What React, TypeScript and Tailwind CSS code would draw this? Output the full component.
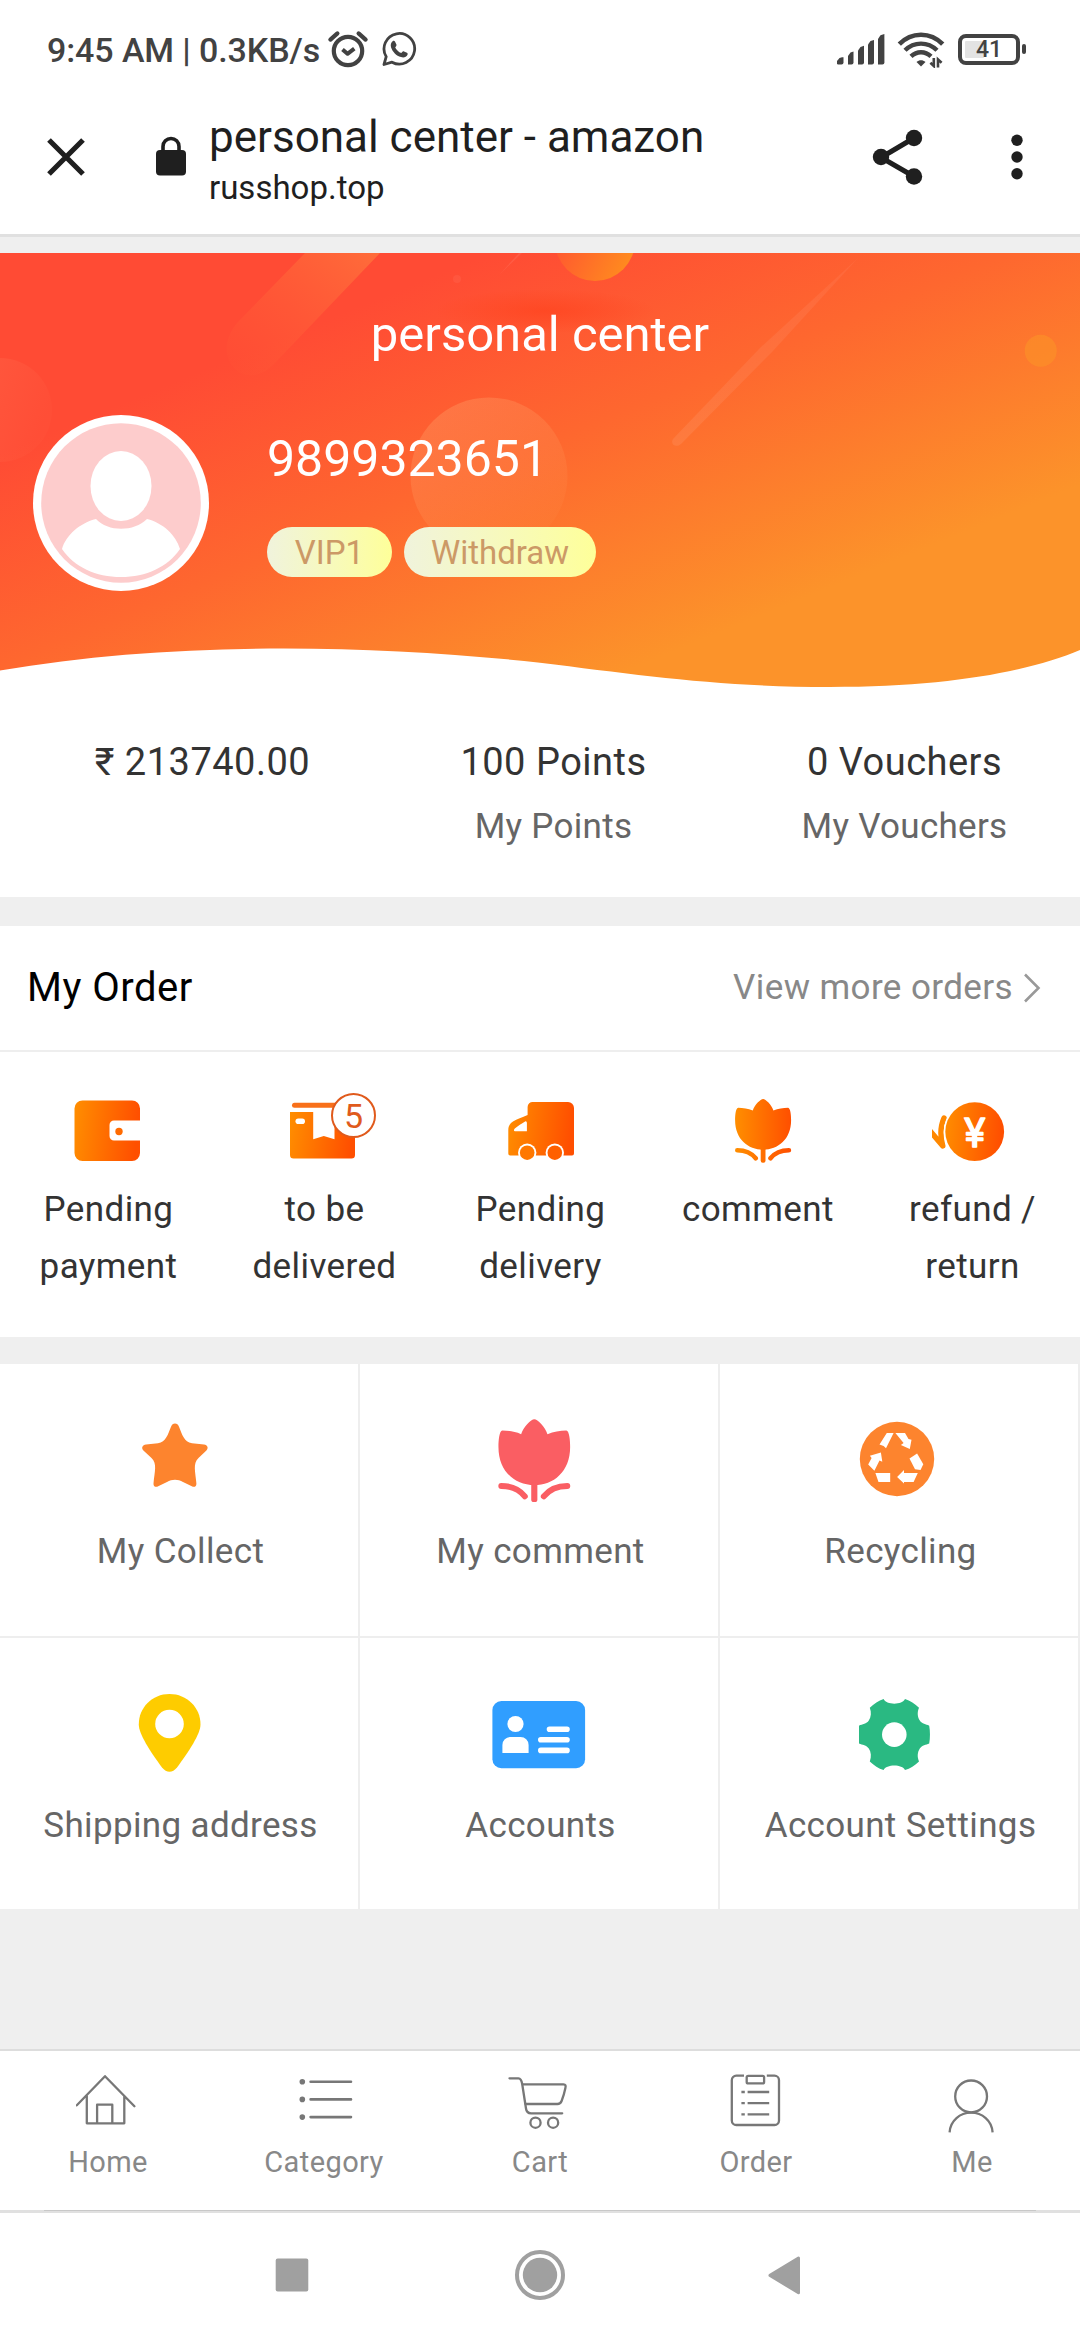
import React from "react";

const orderGradient = (id: string) => (
  <defs>
    <linearGradient id={id} x1="0" x2="1" y1="0" y2="0.1">
      <stop offset="0" stopColor="#ff8e00" />
      <stop offset="1" stopColor="#ff4f00" />
    </linearGradient>
  </defs>
);

function TulipShape({ fill }: { fill: string }) {
  return (
    <>
      <path
        d="M0 -50.3C2.5 -50.3 8.5 -44.5 10.3 -38.8C15 -40.8 20 -41.5 25 -41.6C27.4 -41.2 28 -34 28 -29C28 -10 15 0.4 0 0.4C-15 0.4 -28 -10 -28 -29C-28 -34 -27.4 -41.2 -25 -41.6C-20 -41.5 -15 -40.8 -10.3 -38.8C-8.5 -44.5 -2.5 -50.3 0 -50.3Z"
        fill={fill}
      />
      <path
        d="M-25.8 1C-18 1 -11.5 4 -7.4 9M25.8 1C18 1 11.5 4 7.4 9"
        fill="none"
        stroke={fill}
        strokeWidth="4.6"
        strokeLinecap="round"
      />
      <rect x="-2.4" y="-2" width="4.8" height="15.4" rx="2" fill={fill} />
    </>
  );
}

function WalletIcon() {
  return (
    <svg className="h-[76px] w-[90px]" viewBox="0 0 90 76">
      {orderGradient("g-wallet")}
      <path
        d="M19.5 10.5H69A8 8 0 0 1 77 18.5V30.5H51A4.5 4.5 0 0 0 46.5 35V46A4.5 4.5 0 0 0 51 50.5H77V63A8 8 0 0 1 69 71H19.5A8 8 0 0 1 11.5 63V18.5A8 8 0 0 1 19.5 10.5Z"
        fill="url(#g-wallet)"
      />
      <circle cx="56" cy="41.5" r="3.7" fill="#ff6a00" />
    </svg>
  );
}

function BoxIcon() {
  return (
    <svg className="h-[76px] w-[90px]" viewBox="0 0 90 76">
      {orderGradient("g-box")}
      <rect x="13" y="12.7" width="56" height="5" rx="2.5" fill="#f8701a" />
      <path
        d="M11 22H34.2V49.3L44.8 46L55.5 49.3V22H76V65A3.5 3.5 0 0 1 72.5 68.5H14.5A3.5 3.5 0 0 1 11 65Z"
        fill="url(#g-box)"
      />
      <rect x="16.5" y="28.5" width="9.5" height="5.6" rx="2.8" fill="#fff" />
    </svg>
  );
}

function TruckIcon() {
  return (
    <svg className="h-[76px] w-[90px]" viewBox="0 0 90 76">
      {orderGradient("g-truck")}
      <path
        d="M38 12H73A6 6 0 0 1 79 18V63.5A2 2 0 0 1 77 65.5H15.5A2 2 0 0 1 13.3 63.5V40C13.3 36 15 33.5 18 31.5C22 29 27 27.5 32.6 25V17A5 5 0 0 1 38 12Z"
        fill="url(#g-truck)"
      />
      <path d="M20 41.2C18.6 41.2 18.6 39.6 19.8 38.5C22.5 36 27 33.5 30.5 31.2Q31.9 31 31.9 33V41.2Z" fill="#fff" />
      <circle cx="32.2" cy="62.7" r="9.2" fill="#fff" />
      <circle cx="59.8" cy="62.7" r="9.2" fill="#fff" />
      <circle cx="32.2" cy="62.7" r="7.3" fill="#ff7800" />
      <circle cx="59.8" cy="62.7" r="7.3" fill="#ff6000" />
    </svg>
  );
}

function CommentIcon() {
  return (
    <svg className="h-[76px] w-[90px]" viewBox="0 0 90 76">
      <defs>
        <linearGradient id="g-tulip" gradientUnits="userSpaceOnUse" x1="-28" x2="28" y1="0" y2="0">
          <stop offset="0" stopColor="#ff8e00" />
          <stop offset="1" stopColor="#ff4f00" />
        </linearGradient>
      </defs>
      <g transform="translate(52.1 59.3)">
        <TulipShape fill="url(#g-tulip)" />
      </g>
    </svg>
  );
}

function RefundIcon() {
  return (
    <svg className="h-[76px] w-[90px]" viewBox="0 0 90 76">
      {orderGradient("g-refund")}
      <clipPath id="refund-clip">
        <rect x="5" width="85" height="76" />
      </clipPath>
      <path
        d="M17 28C13.5 36 13 46 15.8 56L4 42"
        fill="none"
        stroke="#ff8800"
        strokeWidth="5.4"
        strokeLinecap="round"
        strokeLinejoin="round"
        clipPath="url(#refund-clip)"
      />
      <circle cx="47.7" cy="41.7" r="31" fill="#fff" />
      <circle cx="47.7" cy="41.7" r="29.4" fill="url(#g-refund)" />
      <text
        x="47.7"
        y="56.8"
        textAnchor="middle"
        fill="#fff"
        stroke="#fff"
        strokeWidth="1.4"
        strokeLinejoin="round"
        className="font-['Roboto',sans-serif] text-[40px] font-normal"
      >
        ¥
      </text>
    </svg>
  );
}

function StarIcon() {
  return (
    <svg className="size-[100px]" viewBox="0 0 100 100">
      <path
        d="M46 13.6C48 13.6 49 14.6 50 16.8C53 24 55 32.4 63 33.2L75 34.6C78.6 35 79.8 38 77.4 40.4L69.5 48C63.5 53.5 66.5 62 67.4 73.4C67.5 76.4 65.5 77.6 62.8 76.3L54 72C49 69 43 69 38 72L29.2 76.3C26.5 77.6 24.3 76.4 24.5 73.4C25.5 62 28.5 53.5 22.5 48L14.4 40.4C12 38 13.4 35 17 34.6L29 33.2C37 32.4 39 24 42 16.8C43 14.6 44 13.6 46 13.6Z"
        fill="#fd842e"
      />
    </svg>
  );
}

function TulipIcon() {
  return (
    <svg className="size-[100px]" viewBox="0 0 100 100">
      <g transform="translate(45.3 74.6) scale(1.28 1.3)">
        <TulipShape fill="#fa5e63" />
      </g>
    </svg>
  );
}

function RecycleIcon() {
  return (
    <svg className="size-[100px]" viewBox="0 0 100 100">
      <circle cx="48" cy="49" r="37.2" fill="#fd842e" />
      <g fill="#fff">
        <path d="M37.8 22.9H44.6L37 38.2L34.6 36L30.5 34.6Z" />
        <path d="M46.4 22.9H56L59.5 29L62.5 29.8L60.8 38.9L51.9 35L54.6 33Z" />
        <path d="M20.9 45.7L31.9 42.5L33.3 51.8L30.5 50.4L25.4 60.7L19.2 54.6L22.6 48Z" />
        <path d="M26.4 62.9H41.2V72.1H29.5Z" />
        <path d="M48.1 67.1L55 60V62.9H68.8L64.6 72.1H55V73.6Z" />
        <path d="M60.5 48.6L68.1 43.6L74.3 54.3L71.5 60L66 59.3Z" />
      </g>
    </svg>
  );
}

function PinIcon() {
  return (
    <svg className="size-[100px]" viewBox="0 1 100 100">
      <path
        d="M40.5 11C58 11 71.5 24.5 71.5 41.5C71.5 51 60 68 48 84.5C43.5 90.2 37.5 90.2 33 84.5C21 68 9.8 51 9.8 41.5C9.8 24.5 23 11 40.5 11Z"
        fill="#fecc00"
      />
      <circle cx="40.5" cy="41" r="14.3" fill="#fff" />
    </svg>
  );
}

function CardIcon() {
  return (
    <svg className="size-[100px]" viewBox="0 1 100 100">
      <rect x="3.4" y="18" width="92.7" height="67.2" rx="9" fill="#309eff" />
      <circle cx="26.5" cy="41" r="8.1" fill="#fff" />
      <path d="M13.4 70V62A8 8 0 0 1 21.4 54H31.6A8 8 0 0 1 39.6 62V70Z" fill="#fff" />
      <path
        d="M60.5 46.3H78M51.8 56.7H78M51.8 67.4H78"
        stroke="#fff"
        strokeWidth="5.6"
        strokeLinecap="round"
      />
    </svg>
  );
}

function GearIcon() {
  return (
    <svg className="size-[100px]" viewBox="0 1 100 100">
      <path
        d="M34.6 16.1C37 22.3 53.6 22.3 56 16.1C61 17.8 66 20.8 70 24.8C68 29.5 68.5 34 70.8 37.6C73 41 77 41.3 80.2 42.7C81.2 48 81.2 55 80.2 60.5C77 61.9 73 62.2 70.8 65.6C68.5 69.2 68 73.7 70 78.4C66 82.4 61 85.4 56 87.1C53.6 80.9 37 80.9 34.6 87.1C29.6 85.4 25 82.4 20.8 78.4C22.6 73.7 22.1 69.2 19.8 65.6C17.6 62.2 13.4 61.9 10 60.5V42.7C13.4 41.3 17.6 41 19.8 37.6C22.1 34 22.6 29.5 20.8 24.8C25 20.8 29.6 17.8 34.6 16.1Z"
        fill="#2ab982"
      />
      <circle cx="45.3" cy="51.6" r="12.3" fill="#fff" />
    </svg>
  );
}

const tabIcon = "size-16 fill-none stroke-[#777] stroke-[2.3]";

function HomeIcon() {
  return (
    <svg className={tabIcon} viewBox="0 0 64 64" strokeLinecap="round" strokeLinejoin="round">
      <path d="M0.8 35.3L29 6.2L58.4 36.2M10.8 26V53.3H48.3V26M21.1 53V34.7H36.3V53" />
    </svg>
  );
}

function CategoryIcon() {
  return (
    <svg className={tabIcon} viewBox="0 0 64 64" strokeLinecap="round">
      <path d="M18.6 11.7H59M18.6 29.4H59M18.6 47.1H59" strokeWidth="2.6" />
      <g fill="#777" stroke="none">
        <circle cx="10.3" cy="11.7" r="2.8" />
        <circle cx="10.3" cy="29.4" r="2.8" />
        <circle cx="10.3" cy="47.1" r="2.8" />
      </g>
    </svg>
  );
}

function CartIcon() {
  return (
    <svg className={tabIcon} viewBox="0 0 64 64" strokeLinecap="round" strokeLinejoin="round">
      <path d="M1.5 8.3H10.5C13 8.3 13.7 11 14.2 14L18 38.5C18.4 41.8 20 43.3 23 43.3H54.2" />
      <path d="M14.8 14.3H55.5C57.5 14.3 58 15.5 57.4 18C56.6 22 55.4 26.5 53.6 31C52.6 33.4 51.8 34 49.5 34H17.6" />
      <circle cx="27.5" cy="52.7" r="5.1" />
      <circle cx="45.1" cy="52.7" r="5.1" />
    </svg>
  );
}

function OrderIcon() {
  return (
    <svg className={tabIcon} viewBox="0 0 64 64">
      <path d="M20 5.7H12.3A4.5 4.5 0 0 0 7.8 10.2V50.5A4.5 4.5 0 0 0 12.3 55H50.5A4.5 4.5 0 0 0 55 50.5V10.2A4.5 4.5 0 0 0 50.5 5.7H42.8" />
      <rect x="22.7" y="5.8" width="17.4" height="7.6" rx="1.5" />
      <path d="M17.4 22H20.8M23.6 22H45.2M17.4 33.1H20.8M23.6 33.1H45.2M17.4 44.4H20.8M23.6 44.4H45.2" />
    </svg>
  );
}

function MeIcon() {
  return (
    <svg className={tabIcon} viewBox="0 0 64 64">
      <circle cx="31.1" cy="26.4" r="15.9" />
      <path d="M9.6 62.3C10.4 50.5 20 42.7 31.1 42.7S51.8 50.5 52.6 62.3" />
    </svg>
  );
}

function StatusBar() {
  return (
    <div className="flex h-[100px] items-center pr-[54px] pl-[47px] text-[#424242]">
      <span className="text-[34px] leading-none font-medium tracking-[-0.1px] whitespace-pre">
        9:45 AM | 0.3KB/s
      </span>
      <svg className="ml-[7px] h-[40px] w-[42px] fill-none stroke-[#424242]" viewBox="0 0 42 40">
        <circle cx="21" cy="21" r="14.2" strokeWidth="4.2" />
        <path d="M3.4 9.6L10.4 3.4M38.6 9.6L31.6 3.4" strokeWidth="4.2" strokeLinecap="round" />
        <path d="M15.5 19.5L20.5 23.8L27.3 18.6" strokeWidth="4" strokeLinejoin="round" />
      </svg>
      <svg className="ml-[12px] size-[36px]" viewBox="0 1 36 36">
        <path
          d="M3 33.5L5.2 25.6A15.3 15.3 0 1 1 11 31.2Z"
          fill="none"
          stroke="#424242"
          strokeWidth="2.8"
          strokeLinejoin="round"
        />
        <path
          d="M11.6 10.2C12.6 9.5 13.6 9.7 14.1 10.7L15.4 13.6C15.7 14.4 15.4 15.2 14.2 16.4C15.5 19 17.6 20.9 20.3 22C21.6 20.5 22.1 20 23 20.4L26 21.8C26.8 22.3 26.9 23 26.4 24.1C25.4 26.2 22.6 27 20 26.1C15.2 24.6 11.6 20.8 10.1 16.4C9.4 14 9.8 11.6 11.6 10.2Z"
          fill="#424242"
        />
      </svg>
      <div className="ml-auto flex items-center pb-0.5">
        <svg className="h-[36px] w-[50px] fill-[#424242]" viewBox="0 0 50 36">
          <path d="M1 33V30L3.5 27L6 26.2H7.5V31.5A2 2 0 0 1 5.5 33.5H2Z" />
          <path d="M12 33.5V25L14.5 21.5L17.5 20.5V31.5A2 2 0 0 1 15.5 33.5Z" />
          <path d="M22 33.5V19.5L24.5 16L28 14.8V31.5A2 2 0 0 1 26 33.5Z" />
          <path d="M32 33.5V13.5L34.5 10L38 9V31.5A2 2 0 0 1 36 33.5Z" />
          <path d="M42 33.5V8L44.5 4.2L48.4 3V31.5A2 2 0 0 1 46.4 33.5Z" />
        </svg>
        <svg className="ml-[11px] h-[38px] w-[48px] fill-none stroke-[#424242]" viewBox="0 0 48 38">
          <path d="M2.3 14.2C14.5 1.6 33.5 1.6 45.7 14.2" strokeWidth="4.6" />
          <path d="M8 20.3C17 11.4 31 11.4 40 20.3" strokeWidth="4.4" />
          <path d="M14 26.4C19.8 20.8 28.2 20.8 34 26.4" strokeWidth="4.4" />
          <path d="M19.5 32C22.2 29.5 25.8 29.5 28.5 32L24 36.4Z" fill="#424242" stroke="none" />
          <path d="M33.4 32.8L36.8 36V28M41 37.5V29.5L44.6 32.8" strokeWidth="2.6" />
        </svg>
        <div className="ml-[13px] flex h-[31px] w-[62px] items-center justify-center rounded-[8px] border-4 border-[#424242] bg-linear-to-r from-[#e3e3e3] from-40% to-white to-40% pt-px text-[23px] leading-none font-medium shadow-[inset_0_0_0_3px_white]">
          41
        </div>
        <div className="ml-0.5 h-[10px] w-[4px] rounded-sm bg-[#424242]" />
      </div>
    </div>
  );
}

function AddressBar() {
  return (
    <div className="flex h-[137px] border-b-[3px] border-[#e0e0e0] text-[#1f1f1f]">
      <svg className="mt-[37px] ml-[46px] size-[40px]" viewBox="0 0 40 40">
        <path d="M3 3L37 37M37 3L3 37" stroke="#1f1f1f" strokeWidth="5.2" />
      </svg>
      <svg className="mt-[35px] ml-[69px] h-[42px] w-[32px]" viewBox="0 0 32 42">
        <rect x="1" y="15" width="30" height="25.5" rx="4" fill="#1f1f1f" />
        <path d="M8 16V11.5A8 8 0 0 1 24 11.5V16" fill="none" stroke="#1f1f1f" strokeWidth="3.6" />
      </svg>
      <div className="mt-[10px] ml-[22px] flex flex-col">
        <span className="text-[44px] leading-[54px]">personal center - amazon</span>
        <span className="text-[33px] leading-[48px]">russhop.top</span>
      </div>
      <svg className="mt-[27px] ml-auto h-[60px] w-[54px]" viewBox="0 0 54 60">
        <path d="M43 11L10 30.5L43 49.5" fill="none" stroke="#1f1f1f" strokeWidth="5" />
        <g fill="#1f1f1f">
          <circle cx="43" cy="11" r="8.2" />
          <circle cx="10" cy="30" r="8.2" />
          <circle cx="43" cy="49.5" r="8.2" />
        </g>
      </svg>
      <svg className="mt-[32px] mr-[53px] ml-[82px] h-[50px] w-[20px]" viewBox="0 0 20 50">
        <g fill="#1f1f1f">
          <circle cx="10" cy="8.3" r="5.7" />
          <circle cx="10" cy="25" r="5.7" />
          <circle cx="10" cy="41.7" r="5.7" />
        </g>
      </svg>
    </div>
  );
}

function HeroBackground() {
  return (
    <svg className="absolute inset-0 h-[441px] w-full" viewBox="0 0 1080 441">
      <defs>
        <linearGradient id="hero" gradientUnits="userSpaceOnUse" x1="0" y1="200" x2="166" y2="606">
          <stop offset="0" stopColor="#ff4b34" />
          <stop offset="0.45" stopColor="#fe672f" />
          <stop offset="1" stopColor="#fc932a" />
        </linearGradient>
        <linearGradient id="band" gradientUnits="userSpaceOnUse" x1="360" y1="-20" x2="240" y2="120">
          <stop offset="0" stopColor="#ff6d3a" />
          <stop offset="1" stopColor="#ff5836" stopOpacity="0.15" />
        </linearGradient>
        <linearGradient id="ball" x1="0.1" y1="0.5" x2="0.9" y2="0.9">
          <stop offset="0" stopColor="#ff5a2f" />
          <stop offset="1" stopColor="#ff8c1e" />
        </linearGradient>
        <linearGradient id="soft" x1="0.2" y1="0" x2="0.8" y2="1">
          <stop offset="0" stopColor="#ffc080" stopOpacity="0.26" />
          <stop offset="1" stopColor="#ffc080" stopOpacity="0.02" />
        </linearGradient>
        <linearGradient id="edge" x1="0" y1="0" x2="1" y2="0.4">
          <stop offset="0" stopColor="#ffb080" stopOpacity="0.16" />
          <stop offset="1" stopColor="#ffb080" stopOpacity="0.03" />
        </linearGradient>
        <linearGradient id="comet" x1="0" y1="1" x2="1" y2="0">
          <stop offset="0" stopColor="#fff" stopOpacity="0.08" />
          <stop offset="1" stopColor="#fff" stopOpacity="0.05" />
        </linearGradient>
        <radialGradient id="smudge">
          <stop offset="0" stopColor="#ff431e" stopOpacity="0.7" />
          <stop offset="1" stopColor="#ff431e" stopOpacity="0" />
        </radialGradient>
      </defs>
      <rect width="1080" height="441" fill="url(#hero)" />
      <path
        d="M305 0H380L274 111C262 124 244 127 233 114C223 102 225 84 237 70Z"
        fill="url(#band)"
      />
      <circle cx="0" cy="157" r="52" fill="url(#edge)" />
      <circle cx="489" cy="223" r="78.5" fill="url(#soft)" />
      <ellipse cx="545" cy="58" rx="110" ry="22" fill="url(#smudge)" />
      <circle cx="595" cy="-12" r="40" fill="url(#ball)" />
      <circle cx="457" cy="26" r="4" fill="#fff" fillOpacity="0.05" />
      <path d="M499 22L519 0H522Z" fill="#fff" fillOpacity="0.08" />
      <path
        d="M673 186L760 95L858 5L772 99L681 191C676 195 670 192 673 186Z"
        fill="url(#comet)"
      />
      <circle cx="1040.7" cy="97.7" r="16" fill="#fc9128" fillOpacity="0.65" />
      <path
        d="M0 417.5C170 388 370 391 540 409.7C640 422 720 434 830 434C950 434 1030 418 1080 397V441H0Z"
        fill="#fff"
      />
    </svg>
  );
}

function Avatar() {
  return (
    <svg className="size-[176px]" viewBox="0 0 176 176">
      <circle cx="88" cy="88" r="88" fill="#fff" />
      <circle cx="88" cy="88" r="79.8" fill="#fdcccc" />
      <ellipse cx="88" cy="71" rx="30.5" ry="35" fill="#fff" />
      <path
        d="M63 104C75 117 101 117 114 104C130 108 143 120 147 134C135 152 113 162 88 162S41 152 29 134C33 120 47 108 63 104Z"
        fill="#fff"
      />
    </svg>
  );
}

function Hero() {
  return (
    <section className="relative h-[441px] bg-white text-white">
      <HeroBackground />
      <div className="relative flex flex-col">
        <h1 className="pt-[52px] text-center text-[49px] leading-[60px]">personal center</h1>
        <div className="mt-[50px] flex pl-[33px]">
          <Avatar />
          <div className="ml-[58px] flex flex-col pt-[14px]">
            <span className="text-[50px] leading-[60px]">9899323651</span>
            <div className="mt-[38px] flex gap-3 text-[33px] text-[#cc9966]">
              <span className="h-[50px] w-[125px] rounded-full bg-linear-to-r from-[#f0f3dc] to-[#feff99] text-center leading-[51px]">
                VIP1
              </span>
              <span className="h-[50px] w-[192px] rounded-full bg-linear-to-r from-[#f0f3dc] to-[#feff99] text-center leading-[51px]">
                Withdraw
              </span>
            </div>
          </div>
        </div>
      </div>
    </section>
  );
}

export default function PersonalCenter() {
  const stats = [
    { value: "₹ 213740.00", label: "" },
    { value: "100 Points", label: "My Points" },
    { value: "0 Vouchers", label: "My Vouchers" },
  ];

  const orders = [
    { label: "Pending payment", icon: <WalletIcon /> },
    { label: "to be delivered", icon: <BoxIcon />, badge: 5 },
    { label: "Pending delivery", icon: <TruckIcon /> },
    { label: "comment", icon: <CommentIcon /> },
    { label: "refund / return", icon: <RefundIcon /> },
  ];

  const services = [
    { label: "My Collect", icon: <StarIcon /> },
    { label: "My comment", icon: <TulipIcon /> },
    { label: "Recycling", icon: <RecycleIcon /> },
    { label: "Shipping address", icon: <PinIcon /> },
    { label: "Accounts", icon: <CardIcon /> },
    { label: "Account Settings", icon: <GearIcon /> },
  ];

  const tabs = [
    { label: "Home", icon: <HomeIcon /> },
    { label: "Category", icon: <CategoryIcon /> },
    { label: "Cart", icon: <CartIcon /> },
    { label: "Order", icon: <OrderIcon /> },
    { label: "Me", icon: <MeIcon /> },
  ];

  return (
    <div className="flex h-[2340px] w-[1080px] flex-col overflow-hidden bg-[#efefef] font-['Roboto',sans-serif]">
      <header className="mb-4 bg-white">
        <StatusBar />
        <AddressBar />
      </header>

      <Hero />

      <section className="grid h-[203px] grid-cols-3 bg-white pt-[41px] pl-[27px] text-center">
        {stats.map((s) => (
          <div key={s.value} className="flex flex-col">
            <span className="text-[38px] leading-[54px] tracking-[0.5px] text-[#333]">{s.value}</span>
            <span className="mt-[11px] text-[35px] leading-[54px] tracking-[0.3px] text-[#666]">{s.label}</span>
          </div>
        ))}
      </section>

      <section className="mt-[29px] bg-white">
        <div className="flex h-[126px] items-center border-b-2 border-[#eee] pr-[39px] pl-[27px]">
          <h2 className="text-[40px] tracking-[0.5px] text-black">My Order</h2>
          <span className="ml-auto text-[35px] tracking-[0.4px] text-[#888]">View more orders</span>
          <svg className="ml-[10px] h-[32px] w-[18px]" viewBox="0 0 18 32">
            <path d="M2 2.5L15.5 16L2 29.5" fill="none" stroke="#999" strokeWidth="2.6" />
          </svg>
        </div>
        <div className="grid h-[285px] grid-cols-5 pt-[38px]">
          {orders.map((o) => (
            <div key={o.label} className="flex flex-col items-center">
              <div className="relative">
                {o.icon}
                {o.badge && (
                  <span className="absolute top-[3px] left-[52px] flex size-[45px] items-center justify-center rounded-full border-2 border-[#e05a1c] bg-white text-[34px] leading-none text-[#e05a1c]">
                    {o.badge}
                  </span>
                )}
              </div>
              <span className="mt-[15px] w-[150px] pl-px text-center text-[35px] leading-[57px] tracking-[0.4px] text-[#333]">
                {o.label}
              </span>
            </div>
          ))}
        </div>
      </section>

      <section className="mt-[27px] grid h-[545px] grid-cols-3 grid-rows-[274px_271px]">
        {services.map((s, i) => (
          <div
            key={s.label}
            className={`flex flex-col items-center border-r-2 border-[#eee] bg-white pt-[46px] ${i < 3 ? "border-b-2" : ""}`}
          >
            {s.icon}
            <span className="mt-[17px] pl-[3px] text-[35px] leading-[50px] tracking-[0.35px] text-[#666]">
              {s.label}
            </span>
          </div>
        ))}
      </section>

      <nav className="mt-auto grid h-[161px] grid-cols-5 border-t-2 border-[#ddd] bg-white pt-[19px]">
        {tabs.map((t) => (
          <div key={t.label} className="flex flex-col items-center">
            {t.icon}
            <span className="mt-[10px] text-[29px] leading-9 tracking-[0.4px] text-[#888]">{t.label}</span>
          </div>
        ))}
      </nav>

      <div className="h-[3px] shrink-0 bg-[#e0e0e0]">
        <div className="mx-[44px] h-px bg-[#c8c8c8]" />
      </div>

      <footer className="flex h-[127px] shrink-0 items-center bg-white pb-[3px] pl-[260px]">
        <svg className="size-16" viewBox="0 0 64 64">
          <rect x="15.7" y="15.5" width="32.6" height="33" rx="2" fill="#a0a0a0" />
        </svg>
        <svg className="ml-[184px] size-16" viewBox="0 0 64 64">
          <circle cx="32" cy="32" r="23" fill="none" stroke="#a0a0a0" strokeWidth="4" />
          <circle cx="32" cy="32" r="17.2" fill="#a0a0a0" />
        </svg>
        <svg className="ml-[180px] size-16" viewBox="0 0 64 64">
          <path
            d="M18 32.4L46.5 15V49.8Z"
            fill="#a0a0a0"
            stroke="#a0a0a0"
            strokeWidth="3"
            strokeLinejoin="round"
          />
        </svg>
      </footer>
    </div>
  );
}
